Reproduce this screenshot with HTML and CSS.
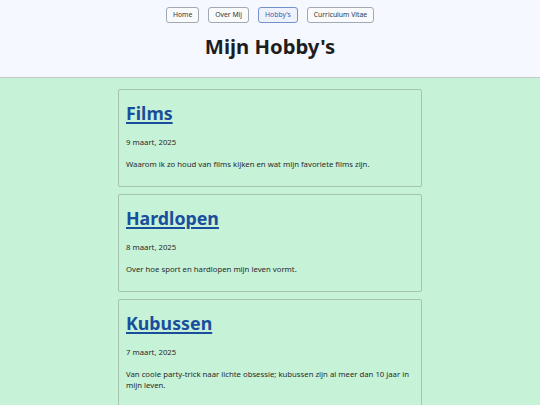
FILE: index.html
```html
<!DOCTYPE html>
<html lang="nl">
<head>
<meta charset="utf-8">
<title>Mijn Hobby's</title>
<link rel="stylesheet" href="styles.css">
</head>
<body>
<header class="site-header">
  <nav class="nav">
    <a class="nav-btn" href="#">Home</a>
    <a class="nav-btn" href="#">Over Mij</a>
    <a class="nav-btn active" href="#">Hobby's</a>
    <a class="nav-btn" href="#">Curriculum Vitae</a>
  </nav>
  <h1 class="page-title">Mijn Hobby's</h1>
</header>
<main class="posts">
  <article class="card">
    <h2 class="card-title"><a href="#">Films</a></h2>
    <p class="card-date">9 maart, 2025</p>
    <p class="card-text">Waarom ik zo houd van films kijken en wat mijn favoriete films zijn.</p>
  </article>
  <article class="card">
    <h2 class="card-title"><a href="#">Hardlopen</a></h2>
    <p class="card-date">8 maart, 2025</p>
    <p class="card-text">Over hoe sport en hardlopen mijn leven vormt.</p>
  </article>
  <article class="card">
    <h2 class="card-title"><a href="#">Kubussen</a></h2>
    <p class="card-date">7 maart, 2025</p>
    <p class="card-text">Van coole party-trick naar lichte obsessie; kubussen zijn al meer dan 10 jaar in mijn leven.</p>
  </article>
</main>
</body>
</html>
```
FILE: styles.css
```css
* { box-sizing: border-box; }
html, body { margin: 0; padding: 0; }
body {
  font-family: "Noto Sans", "Open Sans", sans-serif;
  background: #c6f2d7;
  color: #222;
}
.site-header {
  background: #f5f8fe;
  border-bottom: 1px solid #c2c8cc;
  height: 78px;
  padding-top: 7px;
}
.nav {
  display: flex;
  justify-content: center;
  gap: 9px;
}
.nav-btn {
  display: block;
  height: 16px;
  line-height: 14px;
  padding: 0 6px;
  font-size: 6.8px;
  color: #333;
  text-decoration: none;
  border: 1px solid #a3a9b4;
  border-radius: 3px;
  background: #f9fafc;
}
.nav-btn.active {
  color: #3461b0;
  border-color: #7391cc;
  background: #edf2fd;
}
.page-title {
  margin: 8px 0 0;
  text-align: center;
  font-size: 20.3px;
  line-height: 30px;
  font-weight: 700;
  color: #1e1e1e;
}
.posts {
  width: 304px;
  margin: 11px auto 0;
  display: flex;
  flex-direction: column;
  gap: 7px;
}
.card {
  border: 1px solid #a7c2b0;
  border-radius: 2px;
  padding: 10px 7px 16px;
}
.card-title {
  margin: 0;
  font-size: 17.8px;
  line-height: 26px;
  font-weight: 700;
}
.card-title a {
  color: #1a4e9c;
  text-decoration: underline;
  text-decoration-thickness: 2px;
  text-underline-offset: 2px;
}
.card-date, .card-text {
  font-size: 7.75px;
  line-height: 11px;
  margin: 11px 0 0;
  color: #2a2a2a;
}
```
